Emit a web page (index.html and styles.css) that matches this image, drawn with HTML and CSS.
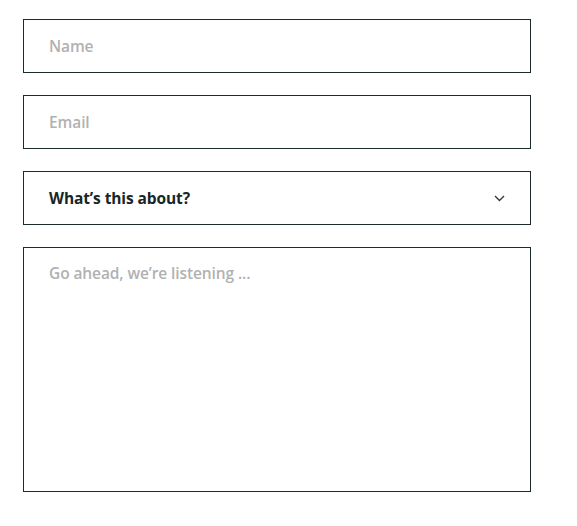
FILE: index.html
```html
<!DOCTYPE html>
<html>
<head>
<meta charset="utf-8">
<link rel="stylesheet" href="styles.css">
</head>
<body>
<form class="form">
  <input class="field" type="text" placeholder="Name">
  <input class="field" type="email" placeholder="Email">
  <div class="select">
    <span class="select-label">What’s this about?</span>
    <svg class="chev" width="11" height="7" viewBox="0 0 11 7"><path d="M1 1 L5.5 5.5 L10 1" fill="none" stroke="#2f3a3a" stroke-width="1.4"/></svg>
  </div>
  <textarea class="field area" placeholder="Go ahead, we’re listening ..."></textarea>
</form>
</body>
</html>
```
FILE: styles.css
```css
html, body { margin: 0; padding: 0; background: #fff; }
body { font-family: "Open Sans", "Lato", sans-serif; }
.form {
  display: flex;
  flex-direction: column;
  gap: 22px;
  width: 508px;
  padding: 19px 0 0 23px;
}
.field, .select {
  box-sizing: border-box;
  width: 508px;
  height: 54px;
  border: 1px solid #1c2b2b;
  border-radius: 0;
  padding: 0 25px;
  font-family: inherit;
  font-size: 15.5px;
  font-weight: 600;
  letter-spacing: -0.1px;
  color: #1a2828;
  background: #fff;
  outline: none;
  margin: 0;
}
.field::placeholder { color: #b1b1b1; opacity: 1; }
.select {
  display: flex;
  align-items: center;
  justify-content: space-between;
  padding-right: 25px;
}
.select-label { font-weight: 700; color: #172626; }
.area {
  height: 245px;
  padding-top: 14px;
  line-height: 22px;
  resize: none;
  display: block;
}
```
